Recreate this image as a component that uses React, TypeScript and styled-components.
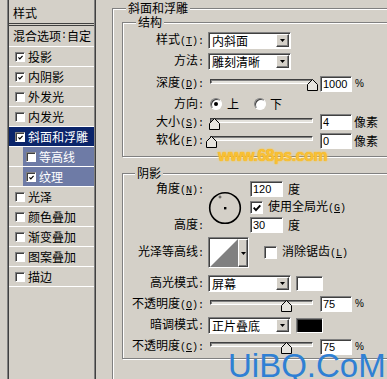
import React from "react";
import styled, { createGlobalStyle } from "styled-components";

const FACE = "#d4d0c8";
const CJK = `"Noto Sans CJK SC", "Noto Sans", sans-serif`;

const GlobalStyle = createGlobalStyle`
  html, body { margin: 0; padding: 0; background: ${FACE}; }
  * { box-sizing: border-box; }
`;

const Screen = styled.div`
  position: relative;
  width: 387px;
  height: 379px;
  overflow: hidden;
  display: flex;
  align-items: flex-start;
  background: ${FACE};
  color: #000;
  font-family: ${CJK};
  font-size: 12px;
  line-height: 14px;
`;

/* ---------- left list ---------- */
const LayerList = styled.div`
  flex: none;
  margin-left: 7px;
  width: 89px;
  height: 379px;
  padding: 0 1px;
  border-left: 1px solid #808080;
  border-right: 1px solid #404040;
  box-shadow: inset 1px 0 0 #404040, inset -1px 0 0 #808080;
  display: flex;
  flex-direction: column;
`;

const ListHead = styled.div`
  height: 26px;
  padding: 6px 0 0 4px;
  border-bottom: 3px double #404040;
`;

const BlendRow = styled.div`
  height: 21px;
  display: flex;
  align-items: center;
  padding-left: 4px;
  border-bottom: 1px solid #fff;
  white-space: nowrap;
`;

type Tone = "plain" | "active" | "sub";

const LayerRow = styled.div`
  flex: none;
  height: 20px;
  display: flex;
  border-bottom: 1px solid #fff;
`;

const LayerBody = styled.div<{ $tone: Tone }>`
  flex: 1;
  display: flex;
  align-items: center;
  gap: 3px;
  margin-left: ${(p) => (p.$tone === "sub" ? 14 : 0)}px;
  padding-left: ${(p) => (p.$tone === "sub" ? 3 : 6)}px;
  background: ${(p) =>
    p.$tone === "active" ? "#0a246a" : p.$tone === "sub" ? "#6e7ba6" : "transparent"};
  color: ${(p) => (p.$tone === "plain" ? "#000" : "#fff")};
  white-space: nowrap;
`;

/* ---------- common controls ---------- */
const Check = styled.span<{ $s: number }>`
  flex: none;
  width: ${(p) => p.$s}px;
  height: ${(p) => p.$s}px;
  background: #fff;
  border: 1px solid;
  border-color: #808080 #fff #fff #808080;
  box-shadow: inset 1px 1px 0 #404040;
  display: flex;
  align-items: center;
  justify-content: center;
  padding: 1px 0 0 1px;
`;

const CheckBox = ({ on, size }: { on?: boolean; size: number }) => (
  <Check $s={size}>
    {on && (
      <svg width={size - 5} height={size - 5} viewBox="0 0 7 7">
        <polyline points="0.6,3.2 2.6,5.4 6.4,1.2" fill="none" stroke="#000" strokeWidth="1.7" />
      </svg>
    )}
  </Check>
);

const Hot = styled.span`
  font-family: "Liberation Mono", monospace;
  font-size: 10px;
`;

const Label = styled.div`
  flex: none;
  width: 81px;
  margin-right: 4px;
  text-align: right;
  white-space: nowrap;
`;

const Caption = ({ text, k, colon = true }: { text: string; k?: string; colon?: boolean }) => (
  <>
    {text}
    <Hot>
      {k ? (
        <>
          (<u>{k}</u>)
        </>
      ) : null}
      {colon ? ":" : ""}
    </Hot>
  </>
);

const Row = styled.div<{ $h: number }>`
  display: flex;
  align-items: center;
  height: ${(p) => p.$h}px;
  white-space: nowrap;
`;

const Select = styled.div`
  flex: none;
  width: 83px;
  height: 17px;
  display: flex;
  background: #fff;
  border: 1px solid;
  border-color: #808080 #fff #fff #808080;
  box-shadow: inset 1px 1px 0 #404040;
  padding: 1px 1px 1px 1px;
`;

const SelectText = styled.div`
  flex: 1;
  padding-left: 2px;
  line-height: 13px;
`;

const DropBtn = styled.div`
  flex: none;
  width: 13px;
  background: ${FACE};
  border: 1px solid;
  border-color: #fff #404040 #404040 #fff;
  box-shadow: inset -1px -1px 0 #808080;
  display: flex;
  align-items: center;
  justify-content: center;
`;

const Arrow = () => (
  <svg width="5" height="3" viewBox="0 0 5 3">
    <polygon points="0,0 5,0 2.5,3" fill="#000" />
  </svg>
);

const Dropdown = ({ value }: { value: string }) => (
  <Select>
    <SelectText>{value}</SelectText>
    <DropBtn>
      <Arrow />
    </DropBtn>
  </Select>
);

const SliderBox = styled.div`
  position: relative;
  flex: none;
  width: 103px;
  height: 12px;
  margin-left: 2px;
  margin-top: 3px;
`;

const Track = styled.div`
  height: 5px;
  background: #e4e2dc;
  border: 1px solid;
  border-color: #404040 #fff #fff #404040;
  box-shadow: inset 1px 1px 0 #808080;
`;

const Thumb = styled.svg<{ $pos: number }>`
  position: absolute;
  top: 0;
  left: ${(p) => p.$pos - 5.5}px;
`;

const Slider = ({ pos }: { pos: number }) => (
  <SliderBox>
    <Track />
    <Thumb $pos={pos} width="11" height="12" viewBox="0 0 11 12">
      <polygon points="5.5,0.5 10.5,5.5 10.5,11.5 0.5,11.5 0.5,5.5" fill="#e6e4de" stroke="#000" strokeWidth="1" />
    </Thumb>
  </SliderBox>
);

const NumBox = styled.div<{ $w?: number; $ml?: number }>`
  flex: none;
  width: ${(p) => p.$w ?? 32}px;
  height: 16px;
  margin-left: ${(p) => p.$ml ?? 7}px;
  background: #fff;
  border: 1px solid;
  border-color: #808080 #fff #fff #808080;
  box-shadow: inset 1px 1px 0 #404040;
  padding-left: 2px;
  font-family: "Liberation Sans", Arial, sans-serif;
  font-size: 11px;
  line-height: 14px;
`;

const Unit = styled.span<{ $ml?: number }>`
  margin-left: ${(p) => p.$ml ?? 2}px;
`;

const Pct = styled.span`
  margin-left: 3px;
  font-family: "Liberation Sans", Arial, sans-serif;
  font-size: 10px;
`;

const Radio = styled.span<{ $on?: boolean; $ml: number }>`
  flex: none;
  width: 12px;
  height: 12px;
  margin-left: ${(p) => p.$ml}px;
  border-radius: 50%;
  background: #fff;
  border: 1px solid;
  border-color: #808080 #fff #fff #808080;
  box-shadow: inset 1px 1px 0 #404040;
  display: flex;
  align-items: center;
  justify-content: center;
  &::after {
    content: "";
    width: 4px;
    height: 4px;
    border-radius: 50%;
    background: ${(p) => (p.$on ? "#000" : "transparent")};
  }
`;

const Text = styled.span<{ $ml: number }>`
  margin-left: ${(p) => p.$ml}px;
`;

const Swatch = styled.div<{ $c: string }>`
  flex: none;
  width: 27px;
  height: 15px;
  margin-left: 5px;
  background: ${(p) => p.$c};
  border: 1px solid;
  border-color: #808080 #fff #fff #808080;
  box-shadow: inset 1px 1px 0 #404040;
`;

/* ---------- groups ---------- */
const Main = styled.div`
  flex: none;
  width: 288px;
  margin-left: 16px;
  padding-top: 8px;
`;

const Group = styled.div<{ $pad: string; $mt?: number; $h?: number }>`
  position: relative;
  border: 1px solid #808080;
  box-shadow: inset 1px 1px 0 #fff, 1px 1px 0 #fff;
  padding: ${(p) => p.$pad};
  margin-top: ${(p) => p.$mt ?? 0}px;
  ${(p) => (p.$h ? `height: ${p.$h}px;` : "")}
`;

const GroupTitle = styled.span<{ $x: number }>`
  position: absolute;
  top: -8px;
  left: ${(p) => p.$x}px;
  padding: 0 2px;
  background: ${FACE};
  line-height: 14px;
  white-space: nowrap;
`;

const AngleBlock = styled.div`
  display: grid;
  grid-template-columns: 81px 38px auto;
  grid-template-rows: 18px 19px 16px;
  column-gap: 4px;
  align-items: center;
  white-space: nowrap;
`;

const AngleLabel = styled.div<{ $r: number }>`
  grid-column: 1;
  grid-row: ${(p) => p.$r};
  text-align: right;
`;

const Dial = styled.svg`
  grid-column: 2;
  grid-row: 1 / 4;
  margin-top: 3px;
`;

const AngleCtl = styled.div<{ $r: number }>`
  grid-column: 3;
  grid-row: ${(p) => p.$r};
  display: flex;
  align-items: center;
`;

const ContourBox = styled.div`
  flex: none;
  width: 41px;
  height: 31px;
  display: flex;
  border: 1px solid;
  border-color: #808080 #fff #fff #808080;
  box-shadow: inset 1px 1px 0 #404040;
  padding: 1px 0 0 1px;
  background: #fff;
`;

const ContourBtn = styled(DropBtn)`
  width: 10px;
`;

const Mark68 = styled.div`
  position: absolute;
  left: 218px;
  top: 148px;
  font-family: "Liberation Sans", Arial, sans-serif;
  font-weight: bold;
  font-size: 16px;
  line-height: 16px;
  letter-spacing: -0.5px;
  color: #f8c234;
  text-shadow: 0 0 1px #f29a10, 0 0 3px #ffd860;
  white-space: nowrap;
`;

const MarkUi = styled.div`
  position: absolute;
  left: 228px;
  top: 349px;
  font-family: "Liberation Sans", Arial, sans-serif;
  font-size: 33px;
  line-height: 33px;
  color: #2f80d4;
  white-space: nowrap;
`;

const layers: { name: string; on?: boolean; tone: Tone }[] = [
  { name: "投影", on: true, tone: "plain" },
  { name: "内阴影", on: true, tone: "plain" },
  { name: "外发光", tone: "plain" },
  { name: "内发光", tone: "plain" },
  { name: "斜面和浮雕", on: true, tone: "active" },
  { name: "等高线", tone: "sub" },
  { name: "纹理", on: true, tone: "sub" },
  { name: "光泽", tone: "plain" },
  { name: "颜色叠加", tone: "plain" },
  { name: "渐变叠加", tone: "plain" },
  { name: "图案叠加", tone: "plain" },
  { name: "描边", tone: "plain" },
];

export default function App() {
  return (
    <>
      <GlobalStyle />
      <Screen>
        <LayerList>
          <ListHead>样式</ListHead>
          <BlendRow>
            混合选项<Hot>:</Hot>自定
          </BlendRow>
          {layers.map((l) => (
            <LayerRow key={l.name}>
              <LayerBody $tone={l.tone}>
                <CheckBox on={l.on} size={10} />
                {l.name}
              </LayerBody>
            </LayerRow>
          ))}
        </LayerList>

        <Main>
          <Group $pad="13px 0 0 9px" $h={400}>
            <GroupTitle $x={13}>斜面和浮雕</GroupTitle>

            <Group $pad="7px 0 6px 0">
              <GroupTitle $x={13}>结构</GroupTitle>
              <Row $h={21}>
                <Label>
                  <Caption text="样式" k="T" />
                </Label>
                <Dropdown value="内斜面" />
              </Row>
              <Row $h={21}>
                <Label>
                  <Caption text="方法" />
                </Label>
                <Dropdown value="雕刻清晰" />
              </Row>
              <Row $h={23}>
                <Label>
                  <Caption text="深度" k="D" />
                </Label>
                <Slider pos={102.5} />
                <NumBox>1000</NumBox>
                <Pct>%</Pct>
              </Row>
              <Row $h={18}>
                <Label>
                  <Caption text="方向" />
                </Label>
                <Radio $on $ml={2} />
                <Text $ml={5}>上</Text>
                <Radio $ml={15} />
                <Text $ml={4}>下</Text>
              </Row>
              <Row $h={18}>
                <Label>
                  <Caption text="大小" k="S" />
                </Label>
                <Slider pos={4.5} />
                <NumBox>4</NumBox>
                <Unit>像素</Unit>
              </Row>
              <Row $h={19}>
                <Label>
                  <Caption text="软化" k="F" />
                </Label>
                <Slider pos={1.5} />
                <NumBox>0</NumBox>
                <Unit>像素</Unit>
              </Row>
            </Group>

            <Group $pad="6px 0 2px 0" $mt={16}>
              <GroupTitle $x={12}>阴影</GroupTitle>
              <AngleBlock>
                <AngleLabel $r={1}>
                  <Caption text="角度" k="N" />
                </AngleLabel>
                <Dial width="34" height="34" viewBox="0 0 34 34">
                  <circle cx="17" cy="17" r="15.3" fill="none" stroke="#000" strokeWidth="1.6" />
                  <rect x="16" y="16" width="2.4" height="2.4" fill="#000" />
                  <line x1="10.5" y1="6" x2="13.5" y2="6" stroke="#333" strokeWidth="0.8" />
                  <line x1="12" y1="4.5" x2="12" y2="7.5" stroke="#333" strokeWidth="0.8" />
                </Dial>
                <AngleCtl $r={1}>
                  <NumBox $w={33} $ml={0}>120</NumBox>
                  <Unit $ml={5}>度</Unit>
                </AngleCtl>
                <AngleCtl $r={2}>
                  <CheckBox on size={13} />
                  <Text $ml={5}>
                    使用全局光
                    <Hot>
                      (<u>G</u>)
                    </Hot>
                  </Text>
                </AngleCtl>
                <AngleLabel $r={3}>
                  <Caption text="高度" />
                </AngleLabel>
                <AngleCtl $r={3}>
                  <NumBox $w={33} $ml={0}>30</NumBox>
                  <Unit $ml={5}>度</Unit>
                </AngleCtl>
              </AngleBlock>

              <Row $h={39}>
                <Label>
                  <Caption text="光泽等高线" />
                </Label>
                <ContourBox>
                  <svg width="28" height="28" viewBox="0 0 28 28">
                    <rect width="28" height="28" fill="#fff" />
                    <polygon points="0,28 28,0 28,28" fill="#808080" />
                  </svg>
                  <ContourBtn>
                    <Arrow />
                  </ContourBtn>
                </ContourBox>
                <Text $ml={15}>
                  <CheckBox size={13} />
                </Text>
                <Text $ml={5}>
                  消除锯齿
                  <Hot>
                    (<u>L</u>)
                  </Hot>
                </Text>
              </Row>
              <Row $h={22}>
                <Label>
                  <Caption text="高光模式" />
                </Label>
                <Dropdown value="屏幕" />
                <Swatch $c="#ffffff" />
              </Row>
              <Row $h={20}>
                <Label>
                  <Caption text="不透明度" k="O" />
                </Label>
                <Slider pos={76.5} />
                <NumBox>75</NumBox>
                <Pct>%</Pct>
              </Row>
              <Row $h={23}>
                <Label>
                  <Caption text="暗调模式" />
                </Label>
                <Dropdown value="正片叠底" />
                <Swatch $c="#000000" />
              </Row>
              <Row $h={19}>
                <Label>
                  <Caption text="不透明度" k="C" />
                </Label>
                <Slider pos={76.5} />
                <NumBox>75</NumBox>
                <Pct>%</Pct>
              </Row>
            </Group>
          </Group>
        </Main>

        <Mark68>www.68ps.com</Mark68>
        <MarkUi>UiBQ.CoM</MarkUi>
      </Screen>
    </>
  );
}
